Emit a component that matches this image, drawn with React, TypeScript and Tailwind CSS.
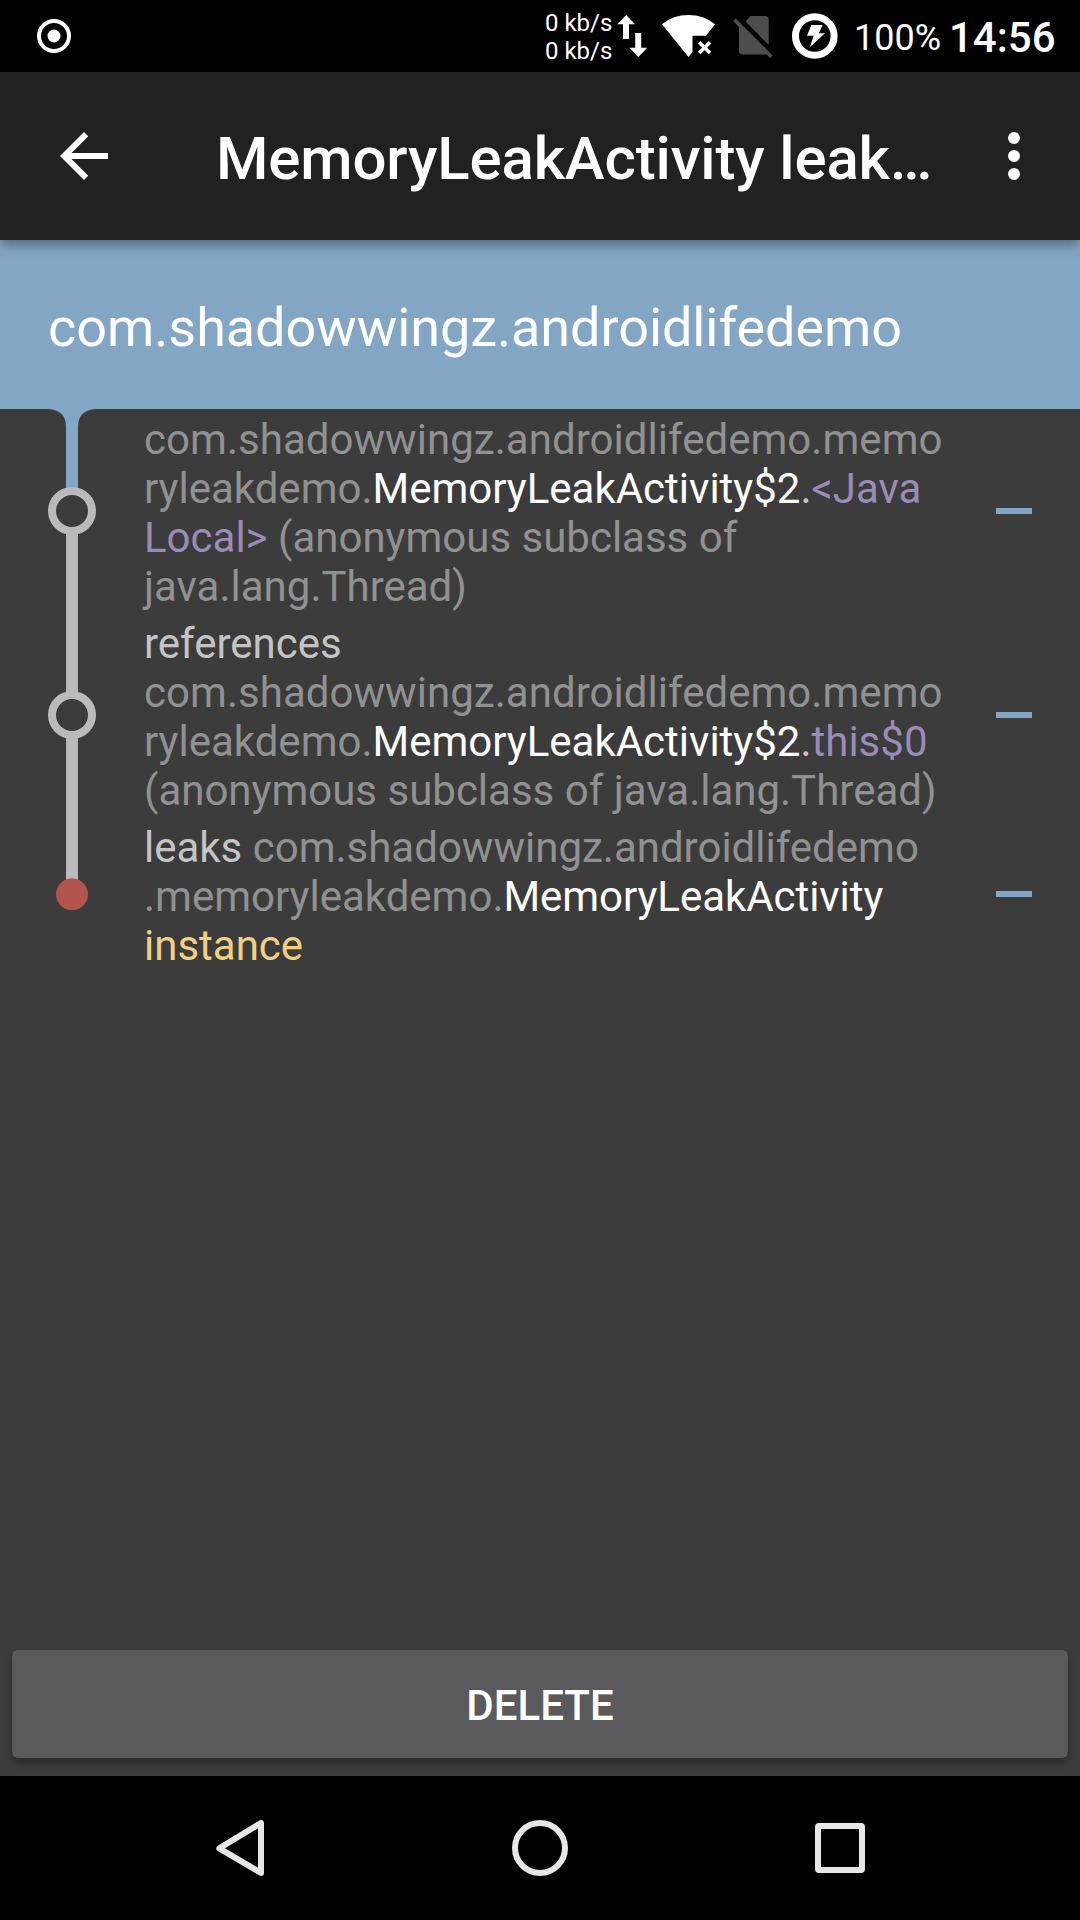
import type { ReactNode } from "react";

function StatusBar() {
  return (
    <div className="flex h-[72px] shrink-0 items-center bg-black text-white">
      <svg className="ml-[36px] h-9 w-9" viewBox="0 0 36 36">
        <circle cx="18" cy="18" r="15" fill="none" stroke="#fff" strokeWidth="4" />
        <circle cx="18" cy="18" r="6.5" fill="#fff" />
      </svg>
      <div className="ml-auto flex w-[71px] flex-col pt-[2px] text-[24px] leading-[28px] whitespace-nowrap">
        <span>0 kb/s</span>
        <span>0 kb/s</span>
      </div>
      <svg className="h-[72px] w-[36px]" viewBox="616 0 36 72" fill="#fff">
        <path d="M626.2 15l8.8 9.3h-6V39h-6V24.3h-5.8zM638.3 57l-8.8-9.3h5.7V33h6v14.7h6z" />
      </svg>
      <svg className="h-[72px] w-[72px]" viewBox="652 0 72 72">
        <path
          d="M688.5 57L662 24.2Q673 15 688.5 15T715 24.2L706 35.7H692.5V52z"
          fill="#fff"
        />
        <path d="M699.2 42.2l10.8 10.8M710 42.2L699.2 53" stroke="#fff" strokeWidth="3.6" />
      </svg>
      <svg className="h-[72px] w-[56px]" viewBox="724 0 56 72" fill="#4d4d4d">
        <path d="M750.5 16H765q3.7 0 3.7 3.7V45L745.5 21.5zM739 24.5l29 29q-1 1-3 1H742.5q-3.5 0-3.5-3.5z" />
        <path d="M735.7 18.5l37 37-2.6 2.6-37-37z" />
      </svg>
      <svg className="h-[72px] w-[74px]" viewBox="780 0 74 72">
        <circle cx="814.8" cy="36" r="19.3" fill="none" stroke="#fff" strokeWidth="7" />
        <path d="M811.3 25h11.4l-3.9 8.3h6.2L810 47l3.6-11.3H807z" fill="#fff" />
      </svg>
      <span className="w-[95px] pt-[4px] text-[36px] leading-[42px] whitespace-nowrap">100%</span>
      <span className="w-[131px] pt-[4px] text-[42px] leading-[48px] font-medium whitespace-nowrap">
        14:56
      </span>
    </div>
  );
}

function AppBar() {
  return (
    <header className="relative z-10 flex h-[168px] shrink-0 items-center bg-[#212121] text-white shadow-[0_4px_12px_rgba(0,0,0,0.4)]">
      <svg className="ml-[48px] h-[72px] w-[72px]" viewBox="0 0 24 24" fill="#fff">
        <path d="M20 11H7.83l5.59-5.59L12 4l-8 8 8 8 1.41-1.41L7.83 13H20z" />
      </svg>
      <h1 className="ml-[96px] w-[762px] pt-[5px] text-[60px] leading-[70px] font-medium tracking-[-0.14px] whitespace-nowrap">
        MemoryLeakActivity leak…
      </h1>
      <svg className="h-[72px] w-[72px]" viewBox="0 0 24 24" fill="#fff">
        <circle cx="12" cy="6" r="2" />
        <circle cx="12" cy="12" r="2" />
        <circle cx="12" cy="18" r="2" />
      </svg>
    </header>
  );
}

function FirstConnector() {
  return (
    <svg className="h-[204px] w-[144px] shrink-0" viewBox="0 0 144 204">
      <path d="M48 0Q66 1 66 18V80H78V18Q78 1 96 0z" fill="#84a6c5" />
      <path d="M66 120h12v84H66z" fill="#bababa" />
      <circle cx="72" cy="102" r="20" fill="none" stroke="#bababa" strokeWidth="8" />
    </svg>
  );
}

function MiddleConnector() {
  return (
    <svg className="h-[204px] w-[144px] shrink-0" viewBox="0 0 144 204">
      <path d="M66 0h12v84H66zM66 120h12v84H66z" fill="#bababa" />
      <circle cx="72" cy="102" r="20" fill="none" stroke="#bababa" strokeWidth="8" />
    </svg>
  );
}

function LastConnector() {
  return (
    <svg className="h-[154px] w-[144px] shrink-0" viewBox="0 0 144 154">
      <path d="M66 0h12v70H66z" fill="#bababa" />
      <circle cx="72" cy="77.3" r="16" fill="#b1554e" />
    </svg>
  );
}

function TraceRow({ connector, children }: { connector: ReactNode; children: ReactNode }) {
  return (
    <div className="flex items-center">
      {connector}
      <p className="flex-1 self-start pt-[6px] text-[42px] leading-[49px] whitespace-nowrap text-[#919191]">
        {children}
      </p>
      <div className="mr-[48px] h-[6px] w-[36px] bg-[#84a6c5]" />
    </div>
  );
}

export default function App() {
  return (
    <div className="flex h-[1920px] w-[1080px] flex-col overflow-hidden bg-[#3c3c3c] font-['Roboto',sans-serif]">
      <StatusBar />
      <AppBar />
      <div className="flex h-[169px] shrink-0 items-center bg-[#84a6c5] pt-[6px] pl-[48px] text-[54px] leading-[64px] tracking-[-0.08px] whitespace-nowrap text-white">
        com.shadowwingz.androidlifedemo
      </div>
      <main className="flex flex-1 flex-col">
        <TraceRow connector={<FirstConnector />}>
          <span className="tracking-[0.04px]">com.shadowwingz.androidlifedemo.memo</span>
          <br />
          ryleakdemo.<span className="text-white">MemoryLeakActivity$2</span>
          <span className="text-[#c4c4c4]">.</span>
          <span className="text-[#9b8bb8]">&lt;Java</span>
          <br />
          <span className="text-[#9b8bb8]">Local&gt;</span> (anonymous subclass of
          <br />
          java.lang.Thread)
        </TraceRow>
        <TraceRow connector={<MiddleConnector />}>
          <span className="text-[#c4c4c4]">references</span>
          <br />
          <span className="tracking-[0.04px]">com.shadowwingz.androidlifedemo.memo</span>
          <br />
          ryleakdemo.<span className="text-white">MemoryLeakActivity$2</span>
          <span className="text-[#c4c4c4]">.</span>
          <span className="text-[#9b8bb8]">this$0</span>
          <br />
          (anonymous subclass of java.lang.Thread)
        </TraceRow>
        <TraceRow connector={<LastConnector />}>
          <span className="text-[#c4c4c4]">leaks</span> com.shadowwingz.androidlifedemo
          <br />
          .memoryleakdemo.<span className="tracking-[-0.05px] text-white">MemoryLeakActivity</span>
          <br />
          <span className="text-[#f3cf83]">instance</span>
        </TraceRow>
      </main>
      <button className="mx-[12px] mb-[18px] flex h-[108px] shrink-0 items-center justify-center rounded-[6px] bg-[#5a595b] pt-[3px] text-[42px] leading-[49px] font-medium text-white shadow-[0_5px_7px_rgba(0,0,0,0.28)]">
        DELETE
      </button>
      <nav className="flex h-[144px] shrink-0 items-center justify-center gap-[228px] bg-black">
        <svg className="h-[72px] w-[72px]" viewBox="204 1812 72 72">
          <path
            d="M261 1823V1873L219.3 1848.3z"
            fill="none"
            stroke="#e6e6e6"
            strokeWidth="6"
            strokeLinejoin="round"
          />
        </svg>
        <svg className="h-[72px] w-[72px]" viewBox="0 0 72 72">
          <circle cx="36" cy="36" r="25" fill="none" stroke="#e6e6e6" strokeWidth="6" />
        </svg>
        <svg className="h-[72px] w-[72px]" viewBox="0 0 72 72">
          <rect x="14" y="14" width="44" height="44" rx="1" fill="none" stroke="#e6e6e6" strokeWidth="6" />
        </svg>
      </nav>
    </div>
  );
}
